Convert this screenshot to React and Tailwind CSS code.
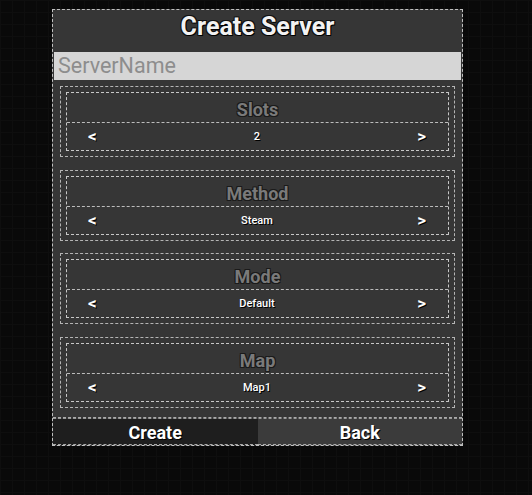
import React from "react";

const font = { fontFamily: "Roboto, 'Liberation Sans', sans-serif" };

function Section({ label, value }) {
  return (
    <div className="h-[71px] border border-dashed border-[#b5b5b5] p-[5px]">
      <div className="h-full border border-dashed border-[#c8c8c8] flex flex-col">
        <div className="h-[29px] flex items-center justify-center text-[18px] font-bold text-[#7a7a7a] [text-shadow:1px_1px_0_#1a1a1a,-1px_-1px_0_#1a1a1a,1px_-1px_0_#1a1a1a,-1px_1px_0_#1a1a1a] pt-[4px]">
          {label}
        </div>
        <div className="flex-1 border-t border-dashed border-[#bdbdbd] flex items-center justify-between pl-[21px] pr-[22px] text-white font-bold [text-shadow:1px_1px_0_#000]">
          <span className="text-[17px] leading-none">&lt;</span>
          <span className="text-[11px] font-medium leading-none">{value}</span>
          <span className="text-[17px] leading-none">&gt;</span>
        </div>
      </div>
    </div>
  );
}

export default function App() {
  return (
    <div
      style={font}
      className="w-[532px] h-[495px] bg-[#090909] bg-[linear-gradient(#0e0e0e_1px,transparent_1px),linear-gradient(90deg,#0e0e0e_1px,transparent_1px)] bg-[size:12px_12px] pl-[52px] pt-[9px]"
    >
      <div className="w-[411px] h-[437px] border border-dashed border-[#c0c0c0] bg-[#363636] flex flex-col">
        <div className="h-[42px] flex items-start justify-center pt-[4px] text-[25px] leading-none font-bold text-[#f2f2f2] [text-shadow:1px_1px_0_#000,-1px_-1px_0_#111,1px_-1px_0_#111,-1px_1px_0_#111]">
          Create Server
        </div>
        <div className="h-[28px] mx-[1px] bg-[#d6d6d6] flex items-center pl-[4px] text-[21.5px] text-[#8d8d8d]">
          ServerName
        </div>
        <div className="flex-1 pt-[6px] px-[7px] pb-[6px] flex flex-col gap-[12.7px] border-b border-dashed border-[#aaaaaa]">
          <Section label="Slots" value="2" />
          <Section label="Method" value="Steam" />
          <Section label="Mode" value="Default" />
          <Section label="Map" value="Map1" />
        </div>
        <div className="h-[27px] flex border-t border-dashed border-[#999]">
          <div className="flex-1 bg-[#1e1e1e] flex items-center justify-center pt-[2px] text-[18px] font-bold text-white [text-shadow:1px_1px_0_#000] border-b border-dashed border-[#aaa]">
            Create
          </div>
          <div className="flex-1 bg-[#3b3b3b] flex items-center justify-center pt-[2px] text-[18px] font-bold text-white [text-shadow:1px_1px_0_#000] border-b border-dashed border-[#aaa]">
            Back
          </div>
        </div>
      </div>
    </div>
  );
}
